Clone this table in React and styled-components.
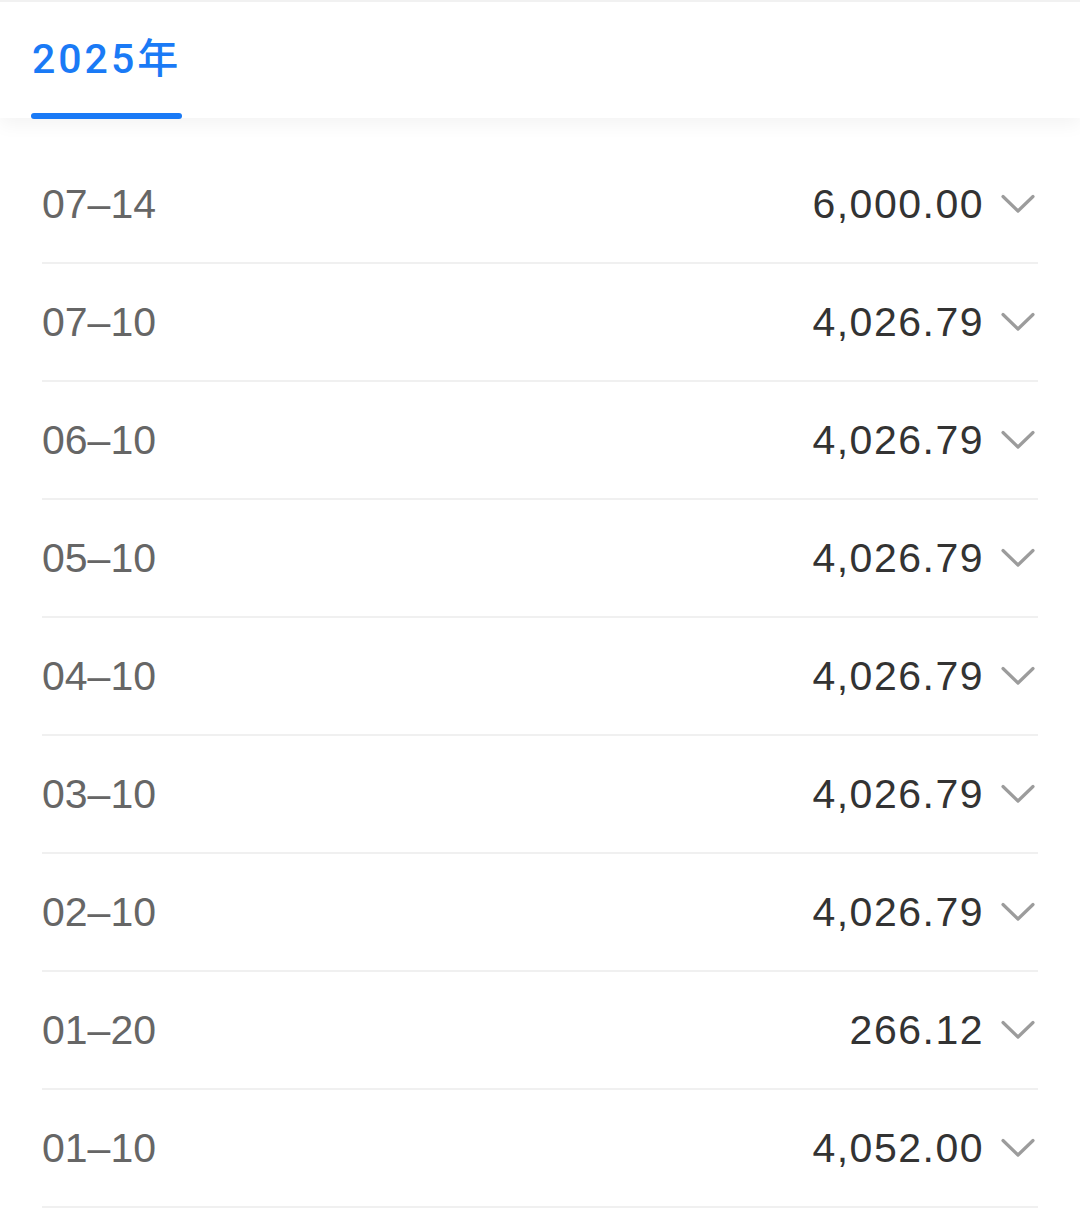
import React from "react";
import styled, { createGlobalStyle } from "styled-components";

const records = [
  { date: "07–14", amount: "6,000.00" },
  { date: "07–10", amount: "4,026.79" },
  { date: "06–10", amount: "4,026.79" },
  { date: "05–10", amount: "4,026.79" },
  { date: "04–10", amount: "4,026.79" },
  { date: "03–10", amount: "4,026.79" },
  { date: "02–10", amount: "4,026.79" },
  { date: "01–20", amount: "266.12" },
  { date: "01–10", amount: "4,052.00" },
];

function Chevron() {
  return (
    <ChevronIcon width="34" height="20" viewBox="0 0 34 20">
      <polyline
        points="2,2.5 17,17 32,2.5"
        fill="none"
        stroke="#9c9c9c"
        strokeWidth="3.2"
        strokeLinecap="round"
        strokeLinejoin="round"
      />
    </ChevronIcon>
  );
}

function App() {
  return (
    <>
      <GlobalStyle />
      <Page>
        <Header>
          <Tab>
            <TabLabel>2025年</TabLabel>
            <TabBar />
          </Tab>
        </Header>
        <List>
          {records.map((r, i) => (
            <Row key={i}>
              <DateText>{r.date}</DateText>
              <Right>
                <Amount>{r.amount}</Amount>
                <Chevron />
              </Right>
            </Row>
          ))}
        </List>
      </Page>
    </>
  );
}

const GlobalStyle = createGlobalStyle`
  body {
    margin: 0;
    background: #fff;
    font-family: "Liberation Sans", "Noto Sans CJK SC", sans-serif;
  }
`;

const Page = styled.div`
  width: 1080px;
  min-height: 1213px;
  background: #fff;
`;

const Header = styled.div`
  position: relative;
  z-index: 1;
  height: 116px;
  border-top: 2px solid #f1f1f1;
  padding-left: 31px;
  display: flex;
  align-items: flex-end;
  background: #fff;
  box-shadow: 0 6px 18px rgba(0, 0, 0, 0.05);
`;

const Tab = styled.div`
  display: flex;
  flex-direction: column;
  align-items: stretch;
`;

const TabLabel = styled.span`
  color: #1a7af6;
  font-family: Roboto, "Noto Sans CJK SC", sans-serif;
  font-size: 41px;
  font-weight: 500;
  line-height: 48px;
  letter-spacing: 3px;
  padding-left: 1px;
  margin-bottom: 30px;
`;

const TabBar = styled.div`
  width: 151px;
  height: 6px;
  border-radius: 3px;
  background: #1a7af6;
  margin-bottom: -1px;
`;

const List = styled.div`
  padding: 28px 42px 0;
`;

const Row = styled.div`
  height: 116px;
  display: flex;
  align-items: center;
  justify-content: space-between;
  border-bottom: 2px solid #f0f0f0;
`;

const DateText = styled.span`
  color: #666;
  font-size: 41px;
`;

const Right = styled.div`
  display: flex;
  align-items: center;
  gap: 18px;
  padding-right: 3px;
`;

const Amount = styled.span`
  color: #333;
  font-size: 41px;
  letter-spacing: 1.5px;
  margin-right: -1px;
`;

const ChevronIcon = styled.svg`
  display: block;
  flex-shrink: 0;
`;

export default App;
